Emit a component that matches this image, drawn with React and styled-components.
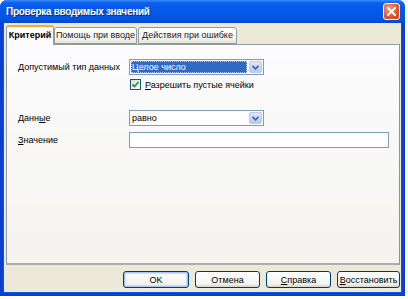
import React from "react";
import styled, { createGlobalStyle } from "styled-components";

/*
  Data validation dialog, Windows XP look.
*/

const Global = createGlobalStyle`
  html, body {
    margin: 0;
    padding: 0;
    background: #ffffff;
  }
  body {
    font-family: "Liberation Sans", "DejaVu Sans", sans-serif;
    font-size: 9px;
    color: #000;
  }
`;

const tabs = [
  { name: "Критерий", width: 48 },
  { name: "Помощь при вводе", width: 83 },
  { name: "Действия при ошибке", width: 99 },
];

export default function App() {
  return (
    <>
      <Global />
      <Window>
        <TitleBar>
          <Title>Проверка вводимых значений</Title>
          <CloseButton>
            <svg width="9" height="9" viewBox="0 0 9 9">
              <path d="M1 1 L8 8 M8 1 L1 8" stroke="#fff" strokeWidth="2" strokeLinecap="square" />
            </svg>
          </CloseButton>
        </TitleBar>

        <Body>
          <TabStrip>
            {tabs.map((t, i) => (
              <Tab key={t.name} $active={i === 0} $width={t.width}>
                {t.name}
              </Tab>
            ))}
          </TabStrip>

          <Panel>
            <Row $top={14}>
              <Label>Допустимый тип данных</Label>
              <Select $width={135}>
                <SelectText $selected>Целое число</SelectText>
                <DropButton>
                  <Chevron />
                </DropButton>
              </Select>
            </Row>

            <CheckRow>
              <CheckBox>
                <svg width="9" height="9" viewBox="0 0 9 9">
                  <path d="M1.5 4.5 L3.5 6.5 L7.5 2" stroke="#21a121" strokeWidth="1.8" fill="none" />
                </svg>
              </CheckBox>
              <span>
                <u>Р</u>азрешить пустые ячейки
              </span>
            </CheckRow>

            <Row $top={20}>
              <Label>
                Данн<u>ы</u>е
              </Label>
              <Select $width={135}>
                <SelectText>равно</SelectText>
                <DropButton>
                  <Chevron />
                </DropButton>
              </Select>
            </Row>

            <Row $top={6}>
              <Label>
                <u>З</u>начение
              </Label>
              <TextInput />
            </Row>
          </Panel>

          <ButtonRow>
            <Button $width={66} $default>OK</Button>
            <Button $width={65}>Отмена</Button>
            <Button $width={65}>
              <u>С</u>правка
            </Button>
            <Button $width={63}>
              <u>В</u>осстановить
            </Button>
          </ButtonRow>
        </Body>
      </Window>
    </>
  );
}

function Chevron() {
  return (
    <svg width="7" height="5" viewBox="0 0 7 5">
      <path d="M0.5 0.8 L3.5 3.8 L6.5 0.8" stroke="#4d6185" strokeWidth="1.6" fill="none" />
    </svg>
  );
}

/* -------------------------------------------------------
   STYLED COMPONENTS
------------------------------------------------------- */

const Window = styled.div`
  width: 405px;
  height: 296px;
  box-sizing: border-box;
  display: flex;
  flex-direction: column;
  background: #ece9d8;
  border: 3px solid #0a3fd0;
  border-top: none;
  border-radius: 7px 7px 0 0;
  box-shadow: inset 0 0 0 1px #0b55e8;
`;

const TitleBar = styled.div`
  height: 23px;
  margin: 0 -3px;
  flex: none;
  display: flex;
  align-items: center;
  justify-content: space-between;
  padding: 0 5px 0 6px;
  border-radius: 7px 7px 0 0;
  background: linear-gradient(
    #3b8cf8 0%,
    #0c61ee 12%,
    #0658e8 45%,
    #0455e4 80%,
    #0348d0 100%
  );
`;

const Title = styled.div`
  color: #fff;
  font-weight: bold;
  font-size: 10px;
  letter-spacing: -0.3px;
  text-shadow: 1px 1px 0 #0a2a8a;
`;

const CloseButton = styled.div`
  width: 17px;
  height: 17px;
  box-sizing: border-box;
  display: flex;
  align-items: center;
  justify-content: center;
  border: 1px solid #fff;
  border-radius: 3px;
  background: radial-gradient(circle at 35% 30%, #f19a7c, #e0552c 60%, #c8401a);
`;

const Body = styled.div`
  flex: 1;
  display: flex;
  flex-direction: column;
  padding: 2px 2px 3px 3px;
`;

const TabStrip = styled.div`
  display: flex;
  align-items: flex-end;
  height: 19px;
  position: relative;
  z-index: 1;
`;

const Tab = styled.div`
  box-sizing: border-box;
  width: ${(p) => p.$width}px;
  height: ${(p) => (p.$active ? "20px" : "17px")};
  padding-top: ${(p) => (p.$active ? "3px" : "2px")};
  margin: ${(p) => (p.$active ? "0 -1px -1px 0" : "0 0 0 1px")};
  text-align: center;
  border: 1px solid #919b9c;
  border-bottom: ${(p) => (p.$active ? "none" : "1px solid #919b9c")};
  border-top: ${(p) => (p.$active ? "2px solid #f7a932" : "1px solid #919b9c")};
  border-radius: 3px 3px 0 0;
  font-weight: ${(p) => (p.$active ? "bold" : "normal")};
  color: ${(p) => (p.$active ? "#000" : "#222")};
  white-space: nowrap;
  background: ${(p) =>
    p.$active ? "#fcfcfe" : "linear-gradient(#ffffff, #f3f3ef 70%, #e6e5dd)"};
`;

const Panel = styled.div`
  flex: 1;
  box-sizing: border-box;
  border: 1px solid #919b9c;
  border-right-color: #8b9496;
  border-bottom: 2px solid #a9aeaf;
  background: linear-gradient(#fcfcfe, #f4f3ee);
  padding: 0 10px 0 11px;
  display: flex;
  flex-direction: column;
`;

const Row = styled.div`
  display: flex;
  align-items: center;
  margin-top: ${(p) => p.$top}px;
`;

const Label = styled.div`
  width: 111px;
  flex: none;
`;

const Select = styled.div`
  width: ${(p) => p.$width}px;
  height: 16px;
  box-sizing: border-box;
  display: flex;
  align-items: center;
  padding: 1px;
  border: 1px solid #7f9db9;
  background: #fff;
`;

const SelectText = styled.div`
  flex: 1;
  height: 100%;
  display: flex;
  align-items: center;
  padding-left: 1px;
  margin-right: 2px;
  color: ${(p) => (p.$selected ? "#fff" : "#000")};
  background: ${(p) => (p.$selected ? "#316ac5" : "transparent")};
  outline: ${(p) => (p.$selected ? "1px dotted #a8c2ee" : "none")};
  outline-offset: -1px;
`;

const DropButton = styled.div`
  width: 13px;
  height: 12px;
  box-sizing: border-box;
  display: flex;
  align-items: center;
  justify-content: center;
  border: 1px solid #bacbf0;
  border-radius: 2px;
  background: linear-gradient(#dde8fd, #c2d3fc 60%, #b6c9f8);
`;

const CheckRow = styled.div`
  display: flex;
  align-items: center;
  gap: 4px;
  margin-top: 4px;
  padding-left: 112px;
`;

const CheckBox = styled.div`
  width: 11px;
  height: 11px;
  box-sizing: border-box;
  display: flex;
  align-items: center;
  justify-content: center;
  border: 1px solid #1c5180;
  background: linear-gradient(135deg, #dcdcd6, #ffffff);
`;

const TextInput = styled.div`
  width: 262px;
  height: 16px;
  box-sizing: border-box;
  border: 1px solid #7f9db9;
  background: #fff;
`;

const ButtonRow = styled.div`
  display: flex;
  justify-content: flex-end;
  gap: 6px;
  padding: 6px 0 0 0;
  height: 17px;
  flex: none;
  margin-bottom: 2px;
`;

const Button = styled.div`
  width: ${(p) => p.$width}px;
  height: 17px;
  box-sizing: border-box;
  display: flex;
  align-items: center;
  justify-content: center;
  border: 1px solid #003c74;
  border-radius: 3px;
  background: linear-gradient(#ffffff, #f3f3ef 80%, #d6d0c5);
  box-shadow: ${(p) =>
    p.$default ? "inset 0 0 0 1px #a9c4f5, inset 0 0 0 2px #cfdefb" : "none"};
`;
